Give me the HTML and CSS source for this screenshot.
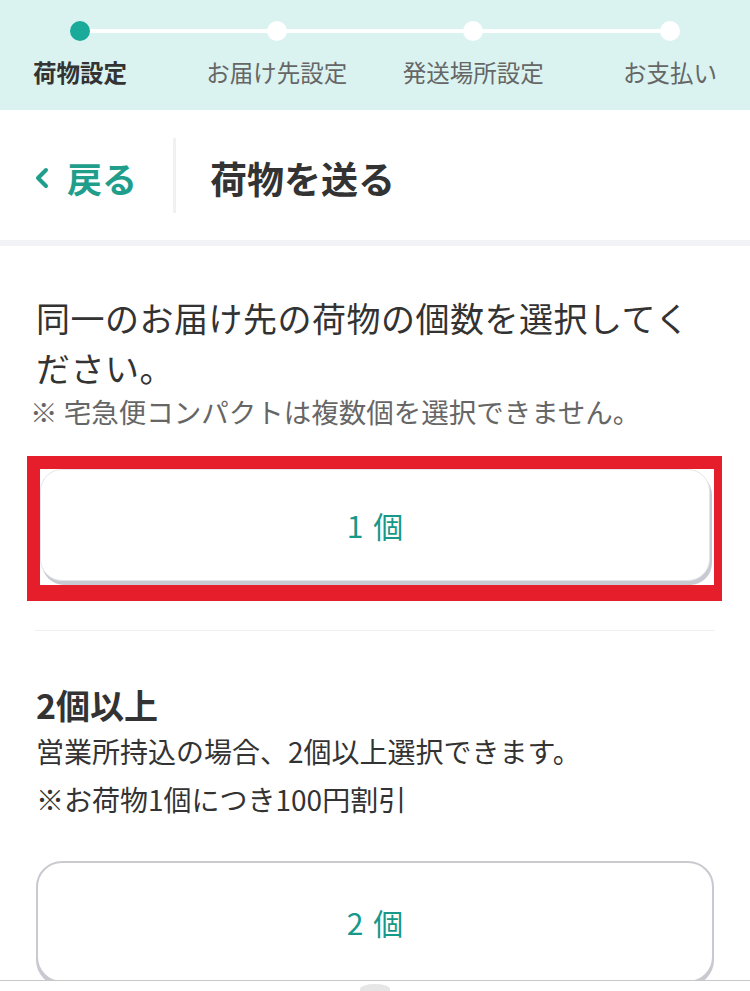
FILE: index.html
```html
<!DOCTYPE html>
<html lang="ja">
<head>
<meta charset="utf-8">
<title>荷物を送る</title>
<link rel="stylesheet" href="styles.css">
</head>
<body>
<header class="progress">
  <ol class="steps">
    <li class="step step-active"><span class="dot"></span><span class="label">荷物設定</span></li>
    <li class="step"><span class="dot"></span><span class="label">お届け先設定</span></li>
    <li class="step"><span class="dot"></span><span class="label">発送場所設定</span></li>
    <li class="step"><span class="dot"></span><span class="label">お支払い</span></li>
  </ol>
</header>
<nav class="nav">
  <a class="back" href="#">
    <svg class="chev" width="15" height="22" viewBox="0 0 15 22"><path d="M12 3 L4 11 L12 19" fill="none" stroke="#1f9e8c" stroke-width="4" stroke-linecap="round" stroke-linejoin="round"/></svg>
    <span class="back-text">戻る</span>
  </a>
  <span class="nav-divider"></span>
  <h1 class="title">荷物を送る</h1>
</nav>
<div class="band"></div>
<main class="content">
  <p class="lead">同一のお届け先の荷物の個数を選択してください。</p>
  <p class="note">※ 宅急便コンパクトは複数個を選択できません。</p>
  <div class="highlight">
    <button class="choice choice-one" type="button"><span class="choice-text">1個</span></button>
  </div>
  <hr class="rule">
  <h2 class="sub">2個以上</h2>
  <p class="desc">営業所持込の場合、2個以上選択できます。</p>
  <p class="desc">※お荷物1個につき100円割引</p>
  <button class="choice choice-two" type="button"><span class="choice-text">2個</span></button>
</main>
<div class="bottombar"><span class="blob"></span></div>
</body>
</html>
```
FILE: styles.css
```css
* { box-sizing: border-box; }
html, body { margin: 0; padding: 0; }
body {
  width: 750px;
  background: #ffffff;
  color: #333333;
  font-family: "Noto Sans CJK JP", "Noto Sans", sans-serif;
  overflow: hidden;
}

.progress {
  background: #daf3f0;
  height: 110px;
}
.steps {
  position: relative;
  list-style: none;
  margin: 0;
  padding: 0 5px;
  display: flex;
  justify-content: space-between;
}
.steps::before {
  content: "";
  position: absolute;
  left: 80px;
  right: 80px;
  top: 29px;
  height: 4px;
  background: #ffffff;
}
.step {
  width: 150px;
  display: flex;
  flex-direction: column;
  align-items: center;
  position: relative;
}
.dot {
  margin-top: 21px;
  width: 20px;
  height: 20px;
  border-radius: 50%;
  background: #ffffff;
}
.step-active .dot { background: #1aaa99; }
.label {
  margin-top: 16px;
  font-size: 23.5px;
  line-height: 30px;
  color: #666666;
  white-space: nowrap;
}
.step-active .label { color: #333333; font-weight: 700; }

.nav {
  height: 130px;
  display: flex;
  align-items: center;
}
.back {
  display: flex;
  align-items: center;
  padding-left: 34px;
  margin-top: 6px;
  text-decoration: none;
  color: #1f9e8c;
}
.chev { margin-right: 18px; }
.back-text {
  font-size: 35px;
  font-weight: 700;
  line-height: 40px;
}
.nav-divider {
  width: 3px;
  height: 75px;
  background: #f1f1f4;
  margin-left: 36px;
}
.title {
  margin: 6px 0 0 34px;
  font-size: 37px;
  font-weight: 700;
  line-height: 44px;
  color: #333333;
}
.band {
  height: 6px;
  background: #f2f3f7;
}

.content {
  padding: 47px 36px 0;
}
.lead {
  margin: 0;
  font-size: 34px;
  letter-spacing: 0.5px;
  line-height: 50px;
  color: #333333;
}
.note {
  margin: 0 0 0 -6px;
  font-size: 27.5px;
  line-height: 36px;
  color: #666666;
  white-space: nowrap;
}
.highlight {
  margin: 27px 0 0 -9px;
  width: 695px;
  height: 145px;
  border-style: solid;
  border-color: #e61e2b;
  border-width: 13px 8px 16px 13px;
  overflow: hidden;
  background: #ffffff;
}
.choice {
  display: flex;
  align-items: center;
  justify-content: center;
  background: #ffffff;
  font-family: "Noto Sans CJK JP", sans-serif;
  color: #17998a;
  font-size: 30px;
  cursor: pointer;
  padding: 0;
}
.choice-text { letter-spacing: 10px; padding-left: 10px; }
.choice-one {
  width: 670px;
  height: 112px;
  border: 1px solid #e4e4ea;
  border-radius: 22px;
  box-shadow: 2px 4px 0 #c9c9d1;
}
.rule {
  margin: 29px 0 0 -1px;
  border: 0;
  height: 1px;
  background: #efeff2;
}
.sub {
  margin: 52px 0 0;
  font-size: 34px;
  font-weight: 700;
  line-height: 44px;
  color: #333333;
}
.desc {
  margin: 0;
  font-size: 28px;
  line-height: 48px;
  color: #333333;
}
.desc:first-of-type { margin-top: 6px; }
.choice-two {
  margin-top: 38px;
  width: 678px;
  height: 122px;
  border: 2px solid #c9c9cf;
  border-radius: 26px;
  box-shadow: 0 3px 0 #c9c9d1;
}

.bottombar {
  position: fixed;
  left: 0;
  right: 0;
  bottom: 0;
  height: 11px;
  background: #ffffff;
  border-top: 1px solid #c8c8c8;
}
.blob {
  position: absolute;
  left: 360px;
  top: 3px;
  width: 30px;
  height: 10px;
  border-radius: 50% 50% 0 0;
  background: #e6e6e6;
}
```
